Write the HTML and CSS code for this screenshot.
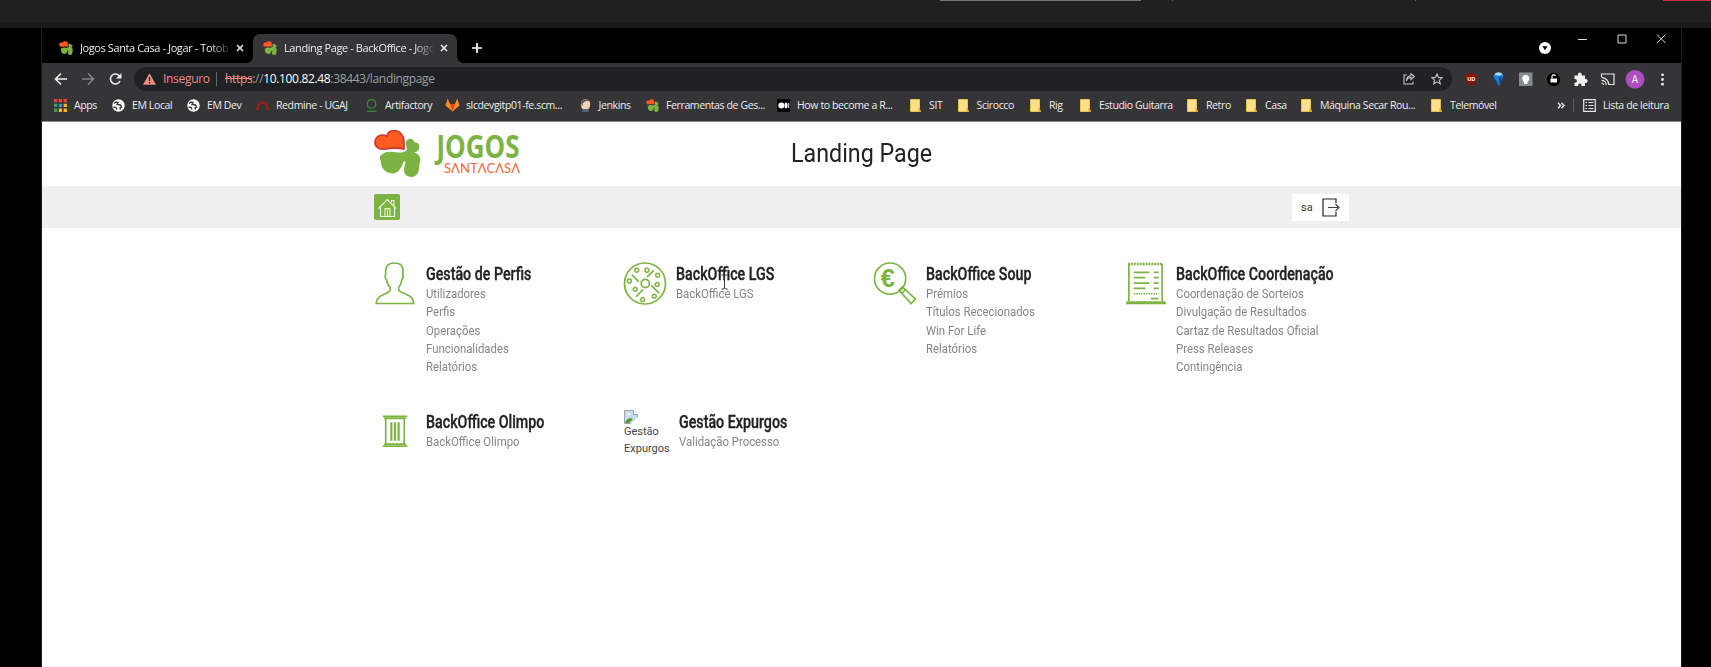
FILE: index.html
```html
<!DOCTYPE html>
<html lang="pt">
<head>
<meta charset="utf-8">
<title>Landing Page - BackOffice - Jogos Santa Casa</title>
<link rel="stylesheet" href="styles.css">
</head>
<body>
<svg width="0" height="0" class="defs">
  <symbol id="clover" viewBox="0 0 47 47">
    <path d="M32.500 20.500C33.500 17 31 15 32 12c1-3.500 7-5 8.500.5 3 0 5 1.500 4.700 4C46 21 42 23 37 22.700c5-1 9.500 2.300 9.300 7C46.300 32.500 45 34 45.300 37 45 43 42 47 37.500 47 32 47 29.500 43 30 39.500c.3-3.500 1.600-5 1.300-8.500l-1.800 1C28 36 27 38.500 24.500 41 22 43.500 19 43.800 16 43 10 42 6.500 36.500 7 31.500c-2-3-1.500-6 1.500-7.500C12 21 18 21.500 22 22.300c4 .5 7 .7 10.500-1.800z" fill="#7cb342"/>
    <path d="M30 19C24 18 18 17.500 12 19 5 20 1 17 1 12.500 1 6 7 3.500 13 6 14 0 21-.5 25 2c4 2 5.500 6 5 17z" fill="#ff5a1f" stroke="#c93636" stroke-width="1.600"/>
  </symbol>
  <symbol id="globe" viewBox="0 0 13 13">
    <circle cx="6.500" cy="6.500" r="6.200" fill="#fff"/>
    <path d="M2 4.500l2-1.500 2 .5-1 2 3.500.5 1 2-1.500 1 .5 1.500M1.500 8l2.500.5L5 10.500" fill="none" stroke="#353538" stroke-width="1.400"/>
  </symbol>
  <symbol id="folder" viewBox="0 0 11 13">
    <path d="M.5.5h9v9.500l1 2.500H.5z" fill="#ffe08a" stroke="#f0c04c"/><path d="M9 9v3.500h1.500" fill="none" stroke="#d9a326"/>
  </symbol>
</svg>

<div class="outer"><i class="pill"></i><i class="tick t1"></i><i class="tick t2"></i><i class="leave"></i></div>

<div class="window">
  <div class="tabs">
    <div class="tab"><svg class="fav"><use href="#clover"/></svg><span class="tab-title"><b>Jogos Santa Casa - Jogar - Totob</b></span><svg class="x" viewBox="0 0 8 8"><path d="M1 1l6 6M7 1L1 7"/></svg></div>
    <div class="tab active"><svg class="fav"><use href="#clover"/></svg><span class="tab-title"><b>Landing Page - BackOffice - Jogo</b></span><svg class="x" viewBox="0 0 8 8"><path d="M1 1l6 6M7 1L1 7"/></svg></div>
    <svg class="plus" viewBox="0 0 10 10"><path d="M5 0v10M0 5h10"/></svg>
    <svg class="drop" viewBox="0 0 12 12"><circle cx="6" cy="6" r="6" fill="#fff"/><path d="M3.300 4.300h5.400L6 8.200z" fill="#000"/></svg>
    <svg class="controls" viewBox="0 0 90 12"><path d="M1 6.500h9M41 2h8v8h-8zM80 1.500l8.500 8.500M88.500 1.500L80 10"/></svg>
  </div>

  <div class="toolbar">
    <svg class="nav-arrows" viewBox="0 0 70 14" fill="none" stroke-width="1.600">
      <path d="M14 7H3M8 1.500L2.500 7 8 12.500" stroke="#eee"/>
      <path d="M29 7h11M35 1.500L40.500 7 35 12.500" stroke="#858588"/>
      <path d="M66.500 4A5 5 0 1 0 67 9" stroke="#eee"/><path d="M68.500 1v5.500H63z" fill="#eee"/>
    </svg>
    <div class="omnibox">
      <svg class="warn" viewBox="0 0 13 12"><path d="M6.500.3L13 11.700H0z" fill="#f28b82"/><path d="M6.500 4v4M6.500 9v1.400" stroke="#202124" stroke-width="1.300"/></svg>
      <span class="insecure">Inseguro</span><i class="bar"></i>
      <span class="url"><s>https</s>://<em>10.100.82.48</em>:38443/landingpage</span>
      <svg class="share" viewBox="0 0 12 12"><path d="M4 2H1v9h9V8.500M3.500 8C4 5.500 5.500 4.500 8 4.500V6.500L11.400 3.500 8 .8v2C5 3 3.500 5 3.500 8z"/></svg>
      <svg class="star" viewBox="0 0 12 12"><path d="M6 .9l1.500 3.500 3.800.3-2.900 2.500.9 3.700L6 8.900l-3.300 2 .9-3.700L.7 4.700l3.800-.3z"/></svg>
    </div>
    <svg class="exts" viewBox="0 0 216 20">
      <path d="M12 3.500c2 1.500 4 2 6 2 .5 5-1 8.500-6 11-5-2.500-6.500-6-6-11 2 0 4-.5 6-2z" fill="#8c1007"/><text x="8.200" y="12.300" class="ud">UD</text>
      <path d="M34.500 7c0-4 10-4 10 0 0 2-3 4-4 9.500h-1.500C38 11 34.500 9 34.500 7z" fill="#1683de"/><path d="M35.500 5.500c2-3 6-3 8 0-2 1.500-6 1.500-8 0z" fill="#a9dcff"/><path d="M40 8l3-.5-2.500 8z" fill="#0b3f91"/>
      <rect x="60" y="3.500" width="13.500" height="13.500" fill="#858a93"/><circle cx="66.700" cy="9.500" r="3.500" fill="#fff"/><path d="M65 12h3.500v3H65z" fill="#fff"/>
      <circle cx="94.500" cy="10.500" r="6.700" fill="#000"/><path d="M91.500 9.500h6.500v4h-6.500z" fill="#fff"/><path d="M93 9.500V7.500c0-2 3-2 3.500-.5" fill="none" stroke="#fff" stroke-width="1.200"/>
      <path d="M115.500 6.500h3.500c-.6-4 4.300-4 3.700 0h3.300v3.600c3.600-.6 3.600 4.300 0 3.700v3.200h-3.500c.3-3.300-3.600-3.300-3.300 0h-3.700v-3.300c3.300.3 3.300-4 0-3.700z" fill="#f1f1f1"/>
      <path d="M142.500 8V5H155v10.500h-5M142.500 14a2 2 0 0 1 2 2M142.500 11.300a4.500 4.500 0 0 1 4.700 4.700M142.500 8.700a7 7 0 0 1 7.300 7.300" fill="none" stroke="#e6e6e6" stroke-width="1.200"/>
      <circle cx="176" cy="10.300" r="9.400" fill="#ad4fc0"/><text x="172.800" y="13.800" class="avatar">A</text>
      <g fill="#eee"><circle cx="203.500" cy="5.800" r="1.400"/><circle cx="203.500" cy="10.500" r="1.400"/><circle cx="203.500" cy="15.200" r="1.400"/></g>
    </svg>
  </div>

  <div class="bookmarks">
    <a><svg viewBox="0 0 13 13"><path d="M0 0h3.300v3.300H0zM4.800 0h3.300v3.300H4.800zM9.600 0h3.300v3.300H9.600z" fill="#e94335"/><path d="M0 4.800h3.300v3.300H0zM0 9.600h3.300v3.300H0z" fill="#35a853"/><path d="M4.800 4.800h3.300v3.300H4.800z" fill="#4285f4"/><path d="M4.800 9.600h3.300v3.300H4.800zM9.600 4.800h3.300v3.300H9.600zM9.600 9.600h3.300v3.300H9.600z" fill="#f9bc15"/></svg>Apps</a>
    <a><svg><use href="#globe"/></svg>EM Local</a>
    <a><svg><use href="#globe"/></svg>EM Dev</a>
    <a><svg viewBox="0 0 13 13"><path d="M1.500 11C1 1 12 1 11.500 11" fill="none" stroke="#a51c14" stroke-width="2.600" stroke-dasharray="3.500 .6"/></svg>Redmine - UGAJ</a>
    <a><svg viewBox="0 0 13 13"><circle cx="6.500" cy="5" r="4.300" fill="none" stroke="#3c8a3f" stroke-width="1.200"/><path d="M2 12.300h9.500" stroke="#3c8a3f" stroke-width="1.200"/></svg>Artifactory</a>
    <a><svg class="fox" viewBox="0 0 13 13"><path d="M0 7L2 .500l2.200 5h4.600L11 .500l2 6.500-6.500 5.500z" fill="#fc8d26"/><path d="M4.200 5.500h4.600l-2.300 7z" fill="#e24329"/></svg>slcdevgitp01-fe.scm...</a>
    <a><svg viewBox="0 0 13 13"><ellipse cx="6.500" cy="5.500" rx="4.700" ry="5.500" fill="#edd3b9"/><path d="M2 4C2 0 8-1 11 2L7 2 4 4l-1 4z" fill="#6b5650"/><path d="M2 13l3-3 5 1v2z" fill="#356782"/><path d="M6 10l4 .5-2 2z" fill="#d33833"/></svg>Jenkins</a>
    <a><svg><use href="#clover"/></svg>Ferramentas de Ges...</a>
    <a><svg viewBox="0 0 13 13"><path d="M0 0h13v13H0z" fill="#000"/><circle cx="4.300" cy="6.500" r="3" fill="#fff"/><ellipse cx="9" cy="6.500" rx="1.500" ry="3" fill="#fff"/><path d="M11.700 4v5" stroke="#fff"/></svg>How to become a R...</a>
    <a class="f"><svg><use href="#folder"/></svg>SIT</a>
    <a class="f"><svg><use href="#folder"/></svg>Scirocco</a>
    <a class="f"><svg><use href="#folder"/></svg>Rig</a>
    <a class="f"><svg><use href="#folder"/></svg>Estudio Guitarra</a>
    <a class="f"><svg><use href="#folder"/></svg>Retro</a>
    <a class="f"><svg><use href="#folder"/></svg>Casa</a>
    <a class="f"><svg><use href="#folder"/></svg>Máquina Secar Rou...</a>
    <a class="f"><svg><use href="#folder"/></svg>Telemóvel</a>
    <a><svg class="more" viewBox="0 0 8 7"><path d="M1 .8l2.500 2.700L1 6.200M4.500 .8L7 3.500 4.500 6.200" fill="none" stroke="#eee" stroke-width="1.400"/></svg></a>
    <a class="reading"><svg viewBox="0 0 13 13"><path d="M.7.700h11.600v11.600H.7zM2.500 3.500h1.500M2.500 6.500h1.500M2.500 9.500h1.500M5.500 3.500h5M5.500 6.500h5M5.500 9.500h5" fill="none" stroke="#e6e6e6" stroke-width="1.200"/></svg>Lista de leitura</a>
  </div>

  <header class="head">
    <svg class="mark"><use href="#clover"/></svg>
    <svg class="wordmark" viewBox="0 0 88 46">
      <text x="3.500" y="26" class="jogos" textLength="83" lengthAdjust="spacingAndGlyphs">JOGOS</text>
      <text x="11" y="41" class="santa" textLength="76" lengthAdjust="spacingAndGlyphs">SΛNTΛCΛSΛ</text>
    </svg>
    <h1>Landing Page</h1>
  </header>
  <nav class="nav">
    <a class="home"><svg viewBox="0 0 26 26"><path d="M4.500 14.500l8.800-9L22 14.500M6.500 13v9.500h14V13M11 22.500v-8h5v8M13.500 15v7.500M17.500 8.500V6.500h2.500v5" fill="none" stroke="#eaf6dc" stroke-width="1.100"/></svg></a>
    <a class="user">sa<svg viewBox="0 0 18 19"><path d="M14 5V1H1v17h13v-4" fill="none" stroke="#222" stroke-width="1.200"/><path d="M6 9.500h11M13.500 6l3.500 3.500-3.500 3.500" fill="none" stroke="#444" stroke-width="1.200"/></svg></a>
  </nav>

  <main class="grid">
    <section><svg class="icon" viewBox="0 0 44 44"><path d="M2.700 42.500h38.500c0-6-4-8-8-9.500-4-1.500-7.500-2.500-7.500-5v-2c3-3 3-5 3.200-8 2.500-2 1.500-4 1-5C31.500 4 27.500 1 21.500 1S11.500 4 12.500 13c-.8 1-1 3.500 1 5 .2 3 .4 5 3.500 8v2c0 2.500-2 3.500-6 5-4 1.500-8 3.500-8.300 9.500z"/></svg>
      <div class="txt"><h2>Gestão de Perfis</h2><a>Utilizadores</a><a>Perfis</a><a>Operações</a><a>Funcionalidades</a><a>Relatórios</a></div></section>
    <section><svg class="icon" viewBox="0 0 44 44"><circle cx="22" cy="22" r="21"/><circle cx="22.300" cy="22" r="4.200"/><g stroke-width="1.500"><circle cx="13.500" cy="8.500" r="2"/><circle cx="24" cy="8.500" r="2"/><circle cx="35" cy="13.500" r="2"/><circle cx="34.500" cy="23" r="2"/><circle cx="31.500" cy="35" r="2"/><circle cx="19.500" cy="38.500" r="2"/><circle cx="12" cy="28" r="2"/><circle cx="6" cy="19.500" r="2"/></g><path d="M8.500 13l7 7M31 8.500l-7 7M28.500 24l8 8M20 28l-7 7.500"/></svg>
      <div class="txt"><h2>BackOffice LGS</h2><a>BackOffice LGS</a></div></section>
    <section><svg class="icon" viewBox="0 0 44 44"><circle cx="17" cy="17" r="16"/><path d="M26 29l3.500-3.500L43 38l-4.500 4.500zM29 32l3.500-3.500"/><text x="7.500" y="26" class="euro">€</text></svg>
      <div class="txt"><h2>BackOffice Soup</h2><a>Prémios</a><a>Títulos Rececionados</a><a>Win For Life</a><a>Relatórios</a></div></section>
    <section><svg class="icon" viewBox="0 0 44 44"><path d="M5.500 40V2M39.500 40V2M2.500 42.500h41M3 41h40"/><path d="M4.500 2h36" stroke-width="2.500" stroke-dasharray="2 1"/><path d="M10.500 10.500h16M10.500 16h12M10.500 21.500h16M10.500 27h12M31 10.500h5M31 16h5M31 21.500h5M31 27h5M28 37.500h8" stroke-width="1.800"/><path d="M10.500 32.500h25.500" stroke-dasharray="1.500 1"/></svg>
      <div class="txt"><h2>BackOffice Coordenação</h2><a>Coordenação de Sorteios</a><a>Divulgação de Resultados</a><a>Cartaz de Resultados Oficial</a><a>Press Releases</a><a>Contingência</a></div></section>
    <section><svg class="icon" viewBox="0 0 44 44"><path d="M9.500 6.500h25M11 8.500h22M11 35h22M9.500 37h25" stroke-width="1.800"/><path d="M12.500 9v26M31.500 9v26"/><path d="M18.300 12.500v19M22 12.500v19M25.700 12.500v19" stroke-width="2.200"/></svg>
      <div class="txt"><h2>BackOffice Olimpo</h2><a>BackOffice Olimpo</a></div></section>
    <section><div class="broken"><svg viewBox="0 0 14 14"><path d="M.5.500h9l4 4v9H.5z" fill="#c7d9f3" stroke="#a5a5a5"/><path d="M9.500.500v4h4" fill="#fff" stroke="#a5a5a5"/><path d="M1 13c1-4 5-6 8-4l-4 4z" fill="#4b9a2f"/><path d="M6.500 14L14 7v7z" fill="#fff"/><path d="M3 5c1-2 3-2 4 0z" fill="#fff"/></svg><span>Gestão</span><span>Expurgos</span></div>
      <div class="txt"><h2>Gestão Expurgos</h2><a>Validação Processo</a></div></section>
  </main>
  <svg class="cursor" viewBox="0 0 7 16"><path d="M.5 1h2l1 1 1-1h2M3.500 2v12M.5 15h2l1-1 1 1h2" fill="none" stroke="#333"/></svg>
</div>
</body>
</html>
```
FILE: styles.css
```css
* { box-sizing: border-box; }
body { margin: 0; background: #000; width: 1711px; height: 667px; overflow: hidden; font-family: Roboto, sans-serif; }
svg { display: block; flex: none; }
.defs { position: absolute; }

.outer { position: relative; height: 28px; background: #202020; border-bottom: 6px solid #1a1a1a; }
.outer i { position: absolute; top: 0; height: 1px; }
.pill { left: 940px; width: 201px; background: #777; }
.tick { width: 1px; background: #666; }
.t1 { left: 1172px; }
.t2 { left: 1415px; }
.leave { left: 1663px; right: 0; background: #c4314b; }

.window { position: relative; margin-left: 41px; width: 1641px; height: 639px; background: #fefefe; border: solid #1c1c1c; border-width: 0 1px; font-family: "Open Sans", sans-serif; }

.tabs { display: flex; align-items: center; height: 35px; background: #000; padding: 6px 0 0 7px; }
.tab { display: flex; align-items: center; width: 204px; height: 29px; padding: 0 0 1px 10px; color: #eee; }
.tab.active { position: relative; background: #353538; border-radius: 7px 7px 0 0; }
.tab.active::before, .tab.active::after { content: ""; position: absolute; bottom: 0; width: 6px; height: 6px; }
.tab.active::before { left: -6px; background: radial-gradient(circle at 0 0, #000 5.500px, #353538 6px); }
.tab.active::after { right: -6px; background: radial-gradient(circle at 100% 0, #000 5.500px, #353538 6px); }
.fav { width: 14px; height: 14px; margin-right: 7px; }
.tab-title { display: flex; align-items: center; width: 149px; height: 18px; margin-top: -1px; white-space: nowrap; -webkit-mask-image: linear-gradient(90deg, #000 130px, rgba(0,0,0,.15) 149px); }
.tab-title b { font-weight: 400; font-size: 11px; letter-spacing: -.4px; line-height: 16px; }
.x { width: 8px; height: 8px; margin-left: 7px; stroke: #eee; stroke-width: 1.500; }
.plus { width: 10px; height: 10px; margin: -1px 0 0 15px; stroke: #fff; stroke-width: 1.700; }
.drop { width: 12px; height: 12px; margin: -2px 0 0 auto; }
.controls { width: 90px; height: 12px; margin: -20px 14px 0 26px; fill: none; stroke: #ddd; }

.toolbar { display: flex; align-items: center; height: 29px; padding: 2px 0 0 11px; background: #353538; }
.nav-arrows { width: 70px; height: 14px; }
.omnibox { display: flex; align-items: center; width: 1318px; height: 24px; margin-left: 11px; padding: 0 9px; border-radius: 12px; background: #202124; font-size: 12px; line-height: 16px; white-space: nowrap; }
.warn { width: 13px; height: 12px; }
.insecure { width: 47px; margin-left: 7px; color: #f28b82; letter-spacing: -.3px; }
.bar { width: 1px; height: 14px; margin: 0 8px 0 6px; background: #66676a; }
.url { color: #9aa0a6; letter-spacing: -.34px; }
.url s { color: #f28b82; }
.url em { color: #fff; font-style: normal; }
.share, .star { width: 12px; height: 12px; fill: none; stroke: #c5c6c9; stroke-width: 1.100; }
.share { margin-left: auto; }
.star { margin: 0 0 0 16px; }
.exts { width: 216px; height: 20px; margin-left: 7px; }
.ud { font: 700 5.500px "Open Sans", sans-serif; fill: #fff; }
.avatar { font: 10px "Open Sans", sans-serif; fill: #fff; }

.bookmarks { display: grid; grid-template-columns: 58px 75px 69px 109px 81px 132.500px 67.500px 131px 133px 47.500px 72.500px 50px 107px 59px 55px 130px 126px 26px auto; align-items: center; height: 30px; padding: 0 0 3px 12px; background: #353538; border-bottom: 1px solid #8d898b; color: #eee; font-size: 10.500px; letter-spacing: -.38px; white-space: nowrap; }
.bookmarks a { display: flex; align-items: center; height: 16px; }
.bookmarks svg { width: 13px; height: 13px; margin-right: 7px; }
.bookmarks .f svg { width: 11px; margin-right: 8px; }
.bookmarks svg.more { width: 8px; height: 7px; margin: 0; }
.bookmarks svg.fox { width: 15px; height: 14px; margin: 0 6px 0 -1px; }
.reading { position: relative; }
.reading::before { content: ""; position: absolute; left: -10px; top: 1px; width: 1px; height: 14px; background: #606063; }

.head { display: flex; height: 64px; padding: 8px 0 0 332px; background: #fff; }
.mark { width: 47px; height: 47px; }
.wordmark { width: 88px; height: 46px; margin: 2px 0 0 12px; overflow: visible; }
.jogos { font: 700 32px "Open Sans", sans-serif; fill: #7cb342; }
.santa { font: 13.500px Lato, sans-serif; fill: #ee6a40; }
.head h1 { margin: 5px 0 0 270px; font: 400 26px/36px Roboto, sans-serif; color: #222; transform: scaleX(.895); transform-origin: 0 0; white-space: nowrap; height: 36px; }
.nav { display: flex; justify-content: space-between; align-items: flex-start; height: 42px; padding: 8px 332px 0; background: #f0f0f1; }
.home { width: 26px; height: 26px; border-radius: 2px; background: #7cb342; }
.user { display: flex; align-items: center; justify-content: space-between; width: 57px; height: 27px; padding: 0 9px; background: #fff; font: 11px Roboto, sans-serif; color: #333; }
.user svg { width: 18px; height: 19px; }

.grid { display: grid; grid-template-columns: repeat(4, 250px); grid-template-rows: 148px auto; padding: 34px 0 0 332px; font-family: Roboto, sans-serif; }
.grid section { display: flex; }
.icon { width: 44px; height: 43px; margin-left: -1px; fill: none; stroke: #7cb342; stroke-width: 1.700; }
.euro { font: 700 26px "Liberation Sans", sans-serif; fill: #7cb342; stroke: none; }
.txt { margin-left: 8px; transform: scaleX(.855); transform-origin: 0 0; white-space: nowrap; }
.icon + .txt { margin-left: 8.500px; }
.txt h2 { margin: 1px 0 0; font-size: 17.500px; line-height: 22px; font-weight: 500; color: #222; transform: scaleX(.953); transform-origin: 0 0; -webkit-text-stroke: .35px #222; }
.txt a { display: block; font-size: 13.300px; line-height: 18.300px; color: #868686; }
.broken { display: flex; flex-direction: column; width: 47px; font-size: 11px; line-height: 17px; color: #444; }
.broken svg { width: 14px; height: 14px; margin-bottom: -1px; }

.cursor { position: absolute; left: 679px; top: 246px; width: 7px; height: 16px; }
```
